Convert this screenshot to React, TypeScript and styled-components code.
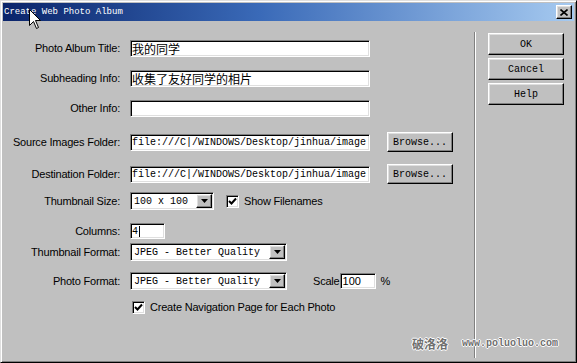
import React from 'react';
import styled, { createGlobalStyle, css } from 'styled-components';

const GlobalStyle = createGlobalStyle`
  html, body {
    margin: 0;
    padding: 0;
    background: #c0c0c0;
  }
  body {
    font-family: "Liberation Sans", Arial, sans-serif;
    font-size: 11px;
    color: #000;
  }
`;

const raised = css`
  border: 1px solid;
  border-color: #ffffff #000000 #000000 #ffffff;
  box-shadow: inset -1px -1px #808080, inset 1px 1px #dfdfdf;
  background: #c0c0c0;
`;

const sunken = css`
  border: 1px solid;
  border-color: #808080 #ffffff #ffffff #808080;
  box-shadow: inset 1px 1px #000000, inset -1px -1px #dfdfdf;
  background: #ffffff;
`;

const Window = styled.div`
  position: relative;
  box-sizing: border-box;
  width: 577px;
  height: 363px;
  padding: 2px;
  display: flex;
  flex-direction: column;
  background: #c0c0c0;
  border: 1px solid;
  border-color: #dfdfdf #000000 #000000 #dfdfdf;
  box-shadow: inset 1px 1px #ffffff, inset -1px -1px #808080;
  overflow: hidden;
`;

const TitleBar = styled.div`
  height: 18px;
  flex-shrink: 0;
  display: flex;
  align-items: center;
  padding: 0 2px 0 1px;
  background: linear-gradient(to right, #0a246a, #3a6ab8 45%, #a6caf0);
  color: #ffffff;
  font-family: "Liberation Mono", monospace;
  font-size: 9px;
`;

const CloseButton = styled.div`
  ${raised};
  box-sizing: border-box;
  margin-left: auto;
  width: 16px;
  height: 14px;
  display: flex;
  align-items: center;
  justify-content: center;
`;

const Body = styled.div`
  flex: 1;
  display: flex;
`;

const Form = styled.div`
  width: 471px;
  padding-top: 18px;
`;

const Row = styled.div<{ $mt: number }>`
  display: grid;
  grid-template-columns: 117px 1fr;
  column-gap: 10px;
  align-items: center;
  height: 18px;
  margin-top: ${(p) => p.$mt}px;
`;

const Label = styled.div`
  text-align: right;
  white-space: nowrap;
  letter-spacing: -0.2px;
`;

const Field = styled.div`
  display: flex;
  align-items: center;
`;

const Box = styled.div<{ $w: number; $h?: number; $mono?: boolean }>`
  ${sunken};
  box-sizing: border-box;
  width: ${(p) => p.$w}px;
  height: ${(p) => p.$h ?? 17}px;
  display: flex;
  align-items: center;
  padding-left: 1px;
  overflow: hidden;
  white-space: nowrap;
  font-family: ${(p) =>
    p.$mono ? '"Liberation Mono", monospace' : '"Noto Sans CJK SC", "Liberation Sans", sans-serif'};
  font-size: ${(p) => (p.$mono ? 10 : 12)}px;
`;

const SansText = styled.span`
  font-family: "Liberation Sans", Arial, sans-serif;
  font-size: 11px;
  padding-left: 1px;
`;

const Caret = styled.span`
  display: inline-block;
  width: 1px;
  height: 11px;
  margin-left: 1px;
  background: #000;
`;

const Select = styled.div<{ $w: number }>`
  ${sunken};
  box-sizing: border-box;
  width: ${(p) => p.$w}px;
  height: 18px;
  display: flex;
  align-items: center;
  padding: 0 1px 0 3px;
  font-family: "Liberation Mono", monospace;
  font-size: 10px;
  white-space: nowrap;
`;

const SelectText = styled.span`
  flex: 1;
`;

const DropButton = styled.div`
  ${raised};
  box-sizing: border-box;
  width: 16px;
  height: 14px;
  display: flex;
  align-items: center;
  justify-content: center;
`;

const Button = styled.div<{ $w: number; $h: number; $ml?: number }>`
  ${raised};
  box-sizing: border-box;
  width: ${(p) => p.$w}px;
  height: ${(p) => p.$h}px;
  margin-left: ${(p) => p.$ml ?? 0}px;
  display: flex;
  align-items: center;
  justify-content: center;
  font-family: "Liberation Mono", monospace;
  font-size: 10px;
`;

const CheckBox = styled.div<{ $ml?: number }>`
  ${sunken};
  box-sizing: border-box;
  width: 13px;
  height: 13px;
  margin-left: ${(p) => p.$ml ?? 0}px;
  display: flex;
  align-items: center;
  justify-content: center;
`;

const Text = styled.span<{ $ml?: number }>`
  margin-left: ${(p) => p.$ml ?? 0}px;
  white-space: nowrap;
  letter-spacing: -0.2px;
`;

const Divider = styled.div`
  width: 0;
  border-left: 1px solid #808080;
  border-right: 1px solid #ffffff;
  margin: 11px 0 2px;
`;

const Side = styled.div`
  display: flex;
  flex-direction: column;
  gap: 3px;
  padding: 12px 0 0 12px;
`;

const Watermark = styled.div`
  position: absolute;
  left: 411px;
  top: 334px;
  display: flex;
  align-items: center;
  gap: 14px;
  color: #6f6f6f;
  text-shadow: 1px 0 #fff, -1px 0 #fff, 0 1px #fff, 0 -1px #fff;
`;

const WatermarkCn = styled.span`
  font-family: "Noto Sans CJK SC", sans-serif;
  font-size: 12px;
  font-weight: bold;
`;

const WatermarkUrl = styled.span`
  font-family: "Liberation Mono", monospace;
  font-size: 10px;
  font-weight: bold;
`;

const Cursor = styled.svg`
  position: absolute;
  left: 28px;
  top: 8px;
`;

function Arrow() {
  return (
    <svg width="7" height="4" viewBox="0 0 7 4">
      <polygon points="0,0 7,0 3.5,4" fill="#000" />
    </svg>
  );
}

function Check() {
  return (
    <svg width="9" height="9" viewBox="0 0 9 9">
      <polyline points="1,4 3.5,6.5 8,1.5" fill="none" stroke="#000" strokeWidth="2" />
    </svg>
  );
}

function Dropdown({ width, value }: { width: number; value: string }) {
  return (
    <Select $w={width}>
      <SelectText>{value}</SelectText>
      <DropButton>
        <Arrow />
      </DropButton>
    </Select>
  );
}

const folder = 'file:///C|/WINDOWS/Desktop/jinhua/image';

export default function App() {
  return (
    <>
      <GlobalStyle />
      <Window>
        <TitleBar>
          <span>Create Web Photo Album</span>
          <CloseButton>
            <svg width="8" height="7" viewBox="0 0 8 7">
              <path d="M0.5 0.5 L7.5 6.5 M7.5 0.5 L0.5 6.5" stroke="#000" strokeWidth="1.6" />
            </svg>
          </CloseButton>
        </TitleBar>
        <Body>
          <Form>
            <Row $mt={0}>
              <Label>Photo Album Title:</Label>
              <Field>
                <Box $w={240}>我的同学</Box>
              </Field>
            </Row>
            <Row $mt={12}>
              <Label>Subheading Info:</Label>
              <Field>
                <Box $w={240}>收集了友好同学的相片</Box>
              </Field>
            </Row>
            <Row $mt={12}>
              <Label>Other Info:</Label>
              <Field>
                <Box $w={240} />
              </Field>
            </Row>
            <Row $mt={15}>
              <Label>Source Images Folder:</Label>
              <Field>
                <Box $w={240} $mono>{folder}</Box>
                <Button $w={66} $h={20} $ml={17}>Browse...</Button>
              </Field>
            </Row>
            <Row $mt={14}>
              <Label>Destination Folder:</Label>
              <Field>
                <Box $w={240} $mono>{folder}</Box>
                <Button $w={66} $h={20} $ml={17}>Browse...</Button>
              </Field>
            </Row>
            <Row $mt={10}>
              <Label>Thumbnail Size:</Label>
              <Field>
                <Dropdown width={84} value="100 x 100" />
                <CheckBox $ml={12}>
                  <Check />
                </CheckBox>
                <Text $ml={5}>Show Filenames</Text>
              </Field>
            </Row>
            <Row $mt={12}>
              <Label>Columns:</Label>
              <Field>
                <Box $w={35} $h={16} $mono>
                  4<Caret />
                </Box>
              </Field>
            </Row>
            <Row $mt={3}>
              <Label>Thumbnail Format:</Label>
              <Field>
                <Dropdown width={157} value="JPEG - Better Quality" />
              </Field>
            </Row>
            <Row $mt={11}>
              <Label>Photo Format:</Label>
              <Field>
                <Dropdown width={157} value="JPEG - Better Quality" />
                <Text $ml={26}>Scale</Text>
                <Box $w={36} $h={16}>
                  <SansText>100</SansText>
                </Box>
                <Text $ml={5}>%</Text>
              </Field>
            </Row>
            <Row $mt={8}>
              <span />
              <Field>
                <CheckBox $ml={2}>
                  <Check />
                </CheckBox>
                <Text $ml={5}>Create Navigation Page for Each Photo</Text>
              </Field>
            </Row>
          </Form>
          <Divider />
          <Side>
            <Button $w={76} $h={22}>OK</Button>
            <Button $w={76} $h={22}>Cancel</Button>
            <Button $w={76} $h={22}>Help</Button>
          </Side>
        </Body>
        <Watermark>
          <WatermarkCn>破洛洛</WatermarkCn>
          <WatermarkUrl>www.poluoluo.com</WatermarkUrl>
        </Watermark>
        <Cursor width="13" height="21" viewBox="0 0 13 21">
          <polygon
            points="0.5,0.5 0.5,16.5 4.5,12.5 7.5,19.5 9.5,18.5 6.5,11.5 11.5,11.5"
            fill="#fff"
            stroke="#000"
            strokeWidth="1"
          />
        </Cursor>
      </Window>
    </>
  );
}
